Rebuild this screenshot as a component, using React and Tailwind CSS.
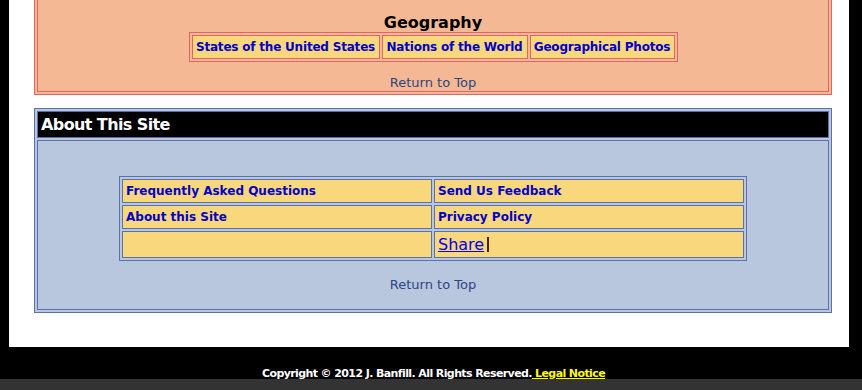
import React from "react";

const FONT = { fontFamily: '"DejaVu Sans", Verdana, sans-serif' };

function GeoCell({ w, children }) {
  return (
    <div
      className={`flex h-[24px] items-center justify-center whitespace-nowrap border border-[#e06666] bg-[#f9d77c] text-[12px] font-bold leading-[14px] tracking-[-0.2px] text-[#0000c8] ${w}`}
    >
      {children}
    </div>
  );
}

function AboutCell({ children }) {
  return (
    <div className="flex h-[24px] items-center border border-[#5a72a8] bg-[#f9d77c] px-[3px] text-[12px] font-bold leading-[14px] text-[#0000c8]">
      {children}
    </div>
  );
}

export default function App() {
  return (
    <div className="relative h-[390px] w-[862px] overflow-hidden bg-black" style={FONT}>
      <div className="ml-[9px] h-[347px] w-[840px] overflow-hidden bg-white">
        {/* Geography section */}
        <div className="ml-[25px] mt-[-10px] w-[798px] border border-[#e06666] bg-[#f4b994] p-[2px]">
          <div className="flex flex-col items-center border border-[#e06666] pt-[19px]">
            <div className="text-[16px] font-bold leading-[19px] text-black">Geography</div>
            <div className="flex gap-[2px] border border-[#e06666] p-[2px]">
              <GeoCell w="w-[188px]">States of the United States</GeoCell>
              <GeoCell w="w-[146px]">Nations of the World</GeoCell>
              <GeoCell w="w-[145px]">Geographical Photos</GeoCell>
            </div>
            <div className="mt-[13px] text-[13px] leading-[16px] text-[#2b4585]">Return to Top</div>
          </div>
        </div>

        {/* About section */}
        <div className="ml-[25px] mt-[13px] w-[798px] border border-[#5a72a8] bg-[#b8c7de] p-[2px]">
          <div className="flex h-[27px] items-center border border-[#5a72a8] bg-black pl-[3px] text-[16px] font-bold leading-[19px] tracking-[-0.6px] text-white">
            About This Site
          </div>
          <div className="mt-[2px] flex flex-col items-center border border-[#5a72a8] pb-[16px] pt-[35px]">
            <div className="flex w-[628px] flex-col gap-[2px] border border-[#5a72a8] p-[2px]">
              <div className="grid grid-cols-2 gap-[2px]">
                <AboutCell>Frequently Asked Questions</AboutCell>
                <AboutCell>Send Us Feedback</AboutCell>
              </div>
              <div className="grid grid-cols-2 gap-[2px]">
                <AboutCell>About this Site</AboutCell>
                <AboutCell>Privacy Policy</AboutCell>
              </div>
              <div className="grid grid-cols-2 gap-[2px]">
                <div className="h-[27px] border border-[#5a72a8] bg-[#f9d77c]" />
                <div className="flex h-[27px] items-center border border-[#5a72a8] bg-[#f9d77c] px-[3px]">
                  <span className="text-[16px] leading-[19px] text-[#0000ee] underline">Share</span>
                  <span className="ml-[3px] inline-block h-[15px] w-[2px] bg-[#4a2208]" />
                </div>
              </div>
            </div>
            <div className="mt-[16px] text-[13px] leading-[16px] text-[#2b4585]">Return to Top</div>
          </div>
        </div>
      </div>

      {/* Footer */}
      <div className="pl-[5px] pt-[20px] text-center text-[11px] font-bold leading-[13px] tracking-[-0.6px] text-white">
        Copyright © 2012 J. Banfill. All Rights Reserved.
        <span className="text-[#ffff00] underline"> Legal Notice</span>
      </div>
      <div className="absolute bottom-0 left-0 h-[11px] w-full bg-[#333333]" />
    </div>
  );
}
